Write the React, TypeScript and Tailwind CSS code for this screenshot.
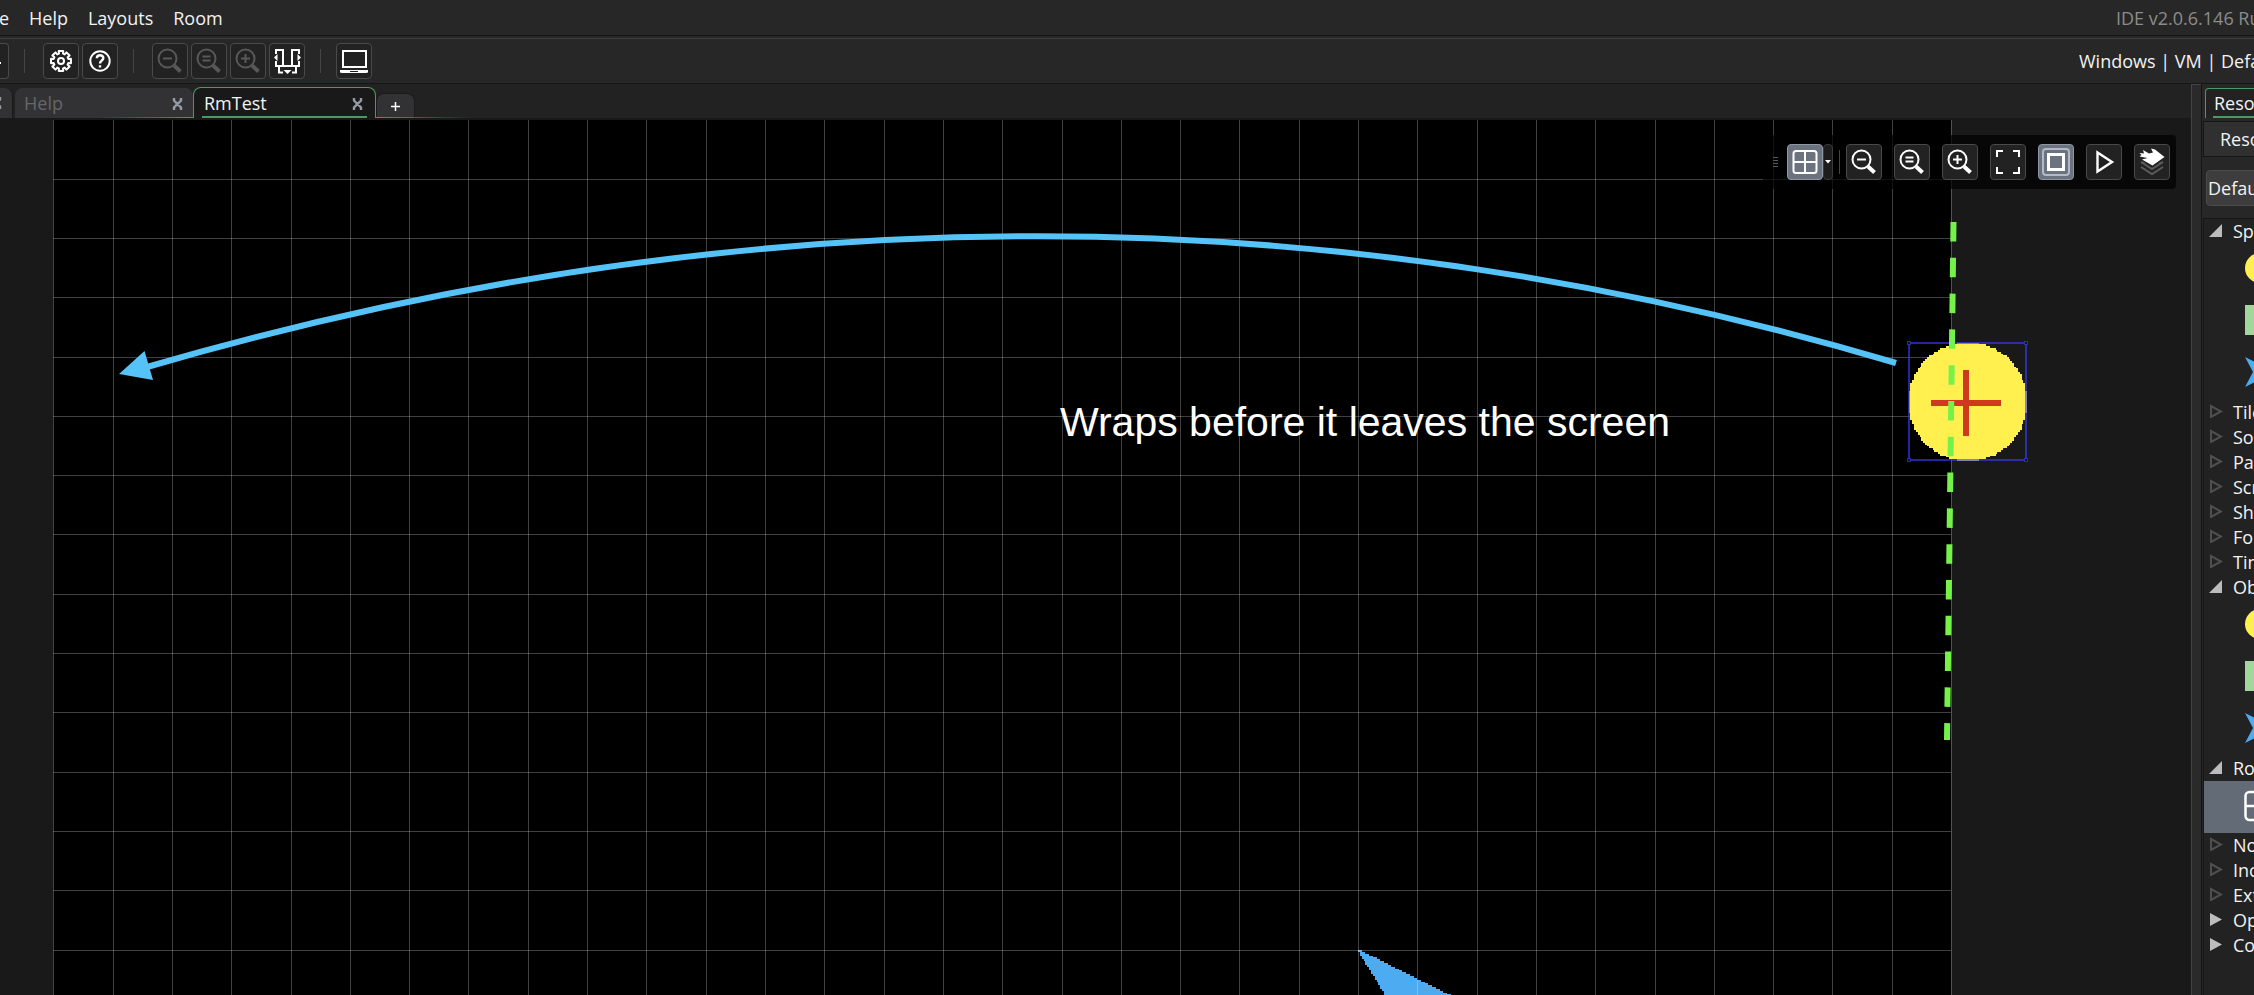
import type { ReactNode } from "react";

const SCALE = 59.3 / 32;

/* ---------- icons ---------- */

function Glyph({ children }: { children: ReactNode }) {
  return (
    <svg width="34" height="34" viewBox="1 1 34 34" fill="none" stroke="currentColor" strokeWidth="2" aria-hidden="true">
      {children}
    </svg>
  );
}

function Magnifier({ mark }: { mark: "minus" | "equal" | "plus" }) {
  return (
    <Glyph>
      <circle cx="15.5" cy="15.5" r="9" />
      <path d="M22 22.5 L28.5 28.5" strokeWidth="4" />
      {mark === "minus" && <path d="M11 15.5H20" />}
      {mark === "equal" && <path d="M11.5 13.5H19.5M11.5 17.5H19.5" />}
      {mark === "plus" && <path d="M11 15.5H20M15.5 11V20" />}
    </Glyph>
  );
}

function gearPath() {
  const pts: string[] = [];
  for (let i = 0; i < 8; i++) {
    const a = (i * Math.PI) / 4;
    for (const [d, r] of [[-0.27, 7.6], [-0.22, 10.2], [0.22, 10.2], [0.27, 7.6]]) {
      pts.push(`${(18 + r * Math.sin(a + d)).toFixed(2)} ${(18 - r * Math.cos(a + d)).toFixed(2)}`);
    }
  }
  return `M${pts.join("L")}Z`;
}

const Gear = () => (
  <Glyph>
    <path d={gearPath()} strokeLinejoin="round" />
    <circle cx="18" cy="18" r="3" />
  </Glyph>
);

const Question = () => (
  <Glyph>
    <circle cx="18" cy="18" r="9.7" />
    <path d="M14.8 15.2C15 11.2 21.4 11.4 21.3 15.1C21.2 17.6 18 17.6 18 20.4M18 22.3V24.6" strokeWidth="2.4" />
  </Glyph>
);

const Docking = () => (
  <Glyph>
    <path d="M7 11V7H14V23M7 18V23H30V18M30 11V7H23V23M10 23V29.500H14M27 23V29.500H23" />
    <path d="M5 14.500L8.500 11V18ZM32 14.500L28.500 11V18ZM14.500 27H22.500L18.500 31Z" fill="currentColor" stroke="none" />
  </Glyph>
);

const Laptop = () => (
  <Glyph>
    <rect x="7" y="8" width="23" height="16" />
    <path d="M4 27H32V29.500L30 30H6L4 29.500Z" fill="currentColor" stroke="none" />
    <path d="M14 28.500H22" stroke="#222222" strokeWidth="1" />
  </Glyph>
);

const GridIcon = () => (
  <Glyph>
    <rect x="6.500" y="7" width="23" height="22" rx="2.500" />
    <path d="M18 7V29M6.500 18H29.500" />
  </Glyph>
);

const Corners = () => (
  <Glyph>
    <path d="M7 13V7H13M23 7H29V13M29 23V29H23M13 29H7V23" />
  </Glyph>
);

const ViewIcon = () => (
  <Glyph>
    <rect x="5" y="5" width="26" height="26" rx="3" stroke="#b4b9c6" />
    <rect x="10.500" y="10.500" width="15" height="15" strokeWidth="3" />
  </Glyph>
);

const Play = () => (
  <Glyph>
    <path d="M11.500 8.500V27.500L26 18Z" strokeWidth="2.400" />
  </Glyph>
);

const LayersIcon = () => (
  <Glyph>
    <path d="M7 18L11 20M25 20L29 18M7 18L18 25L29 18M7 23L18 30L29 23" stroke="#5c5c5c" />
    <path
      d="M17 4.500L21 5.500L30.500 13L18.500 21.500L8 15.500L13.500 14L5.500 12.500L7.500 11L5.500 9L10 9.500L9 6L15 9.500L19 8.500Z"
      fill="currentColor"
      stroke="none"
    />
  </Glyph>
);

/* ---------- shared controls ---------- */

function IconButton({ label, active, disabled, children }: { label: string; active?: boolean; disabled?: boolean; children: ReactNode }) {
  const tone = active
    ? "border-[#9097a4] bg-[#6b7280] text-white"
    : disabled
      ? "border-[#4a4a4a] bg-[#222222] text-[#585858]"
      : "border-[#4a4a4a] bg-[#222222] text-white";
  return (
    <button aria-label={label} disabled={disabled} className={`flex size-9 shrink-0 items-center justify-center rounded-sm border ${tone}`}>
      {children}
    </button>
  );
}

const Divider = ({ className }: { className: string }) => <span className={`h-6 w-px shrink-0 bg-[#454545] ${className}`} />;

const CloseMark = () => (
  <svg width="11" height="12" viewBox="0 0 11 12" fill="none" stroke="#949aa6" strokeWidth="2.400" aria-hidden="true">
    <path d="M2 0V2.500L9 9.500V12M9 0V2.500L2 9.500V12" />
  </svg>
);

/* ---------- room canvas ---------- */

function discPath(x: number, y: number) {
  let d = "";
  for (let r = 0; r < 64; r++) {
    const half = Math.round(Math.sqrt(32 * 32 - (r - 31.5) ** 2));
    d += `M${x + (32 - half) * SCALE} ${y + r * SCALE}h${2 * half * SCALE}v${SCALE + 0.1}h${-2 * half * SCALE}z`;
  }
  return d;
}

function shipPath(x: number, y: number) {
  let d = "";
  for (let r = 0; r < 40; r++) {
    const left = Math.round(r * 0.62);
    const right = Math.round(r * 2 + 2);
    d += `M${x + left * SCALE} ${y + r * SCALE}h${(right - left) * SCALE}v${SCALE + 0.1}h${-(right - left) * SCALE}z`;
  }
  return d;
}

const columns = Array.from({ length: 33 }, (_, i) => Math.round(53.4 + i * 59.3));
const rows = Array.from({ length: 24 }, (_, i) => Math.round(1.4 + i * 59.3));
const handles = [[1909, 225], [2026, 225], [1909, 342], [2026, 342]];

function RoomCanvas() {
  return (
    <svg className="absolute inset-0 size-full" role="img" aria-label="Room RmTest">
      <rect x="53" y="2" width="1898" height="100%" fill="#000000" />
      <path d={shipPath(1358, 832)} fill="#4dacf1" shapeRendering="crispEdges" />
      <g fill="#ffffff" fillOpacity="0.25">
        {columns.map((x) => (
          <rect key={x} x={x} y="2" width="1" height="100%" />
        ))}
        {rows.slice(1).map((y) => (
          <rect key={y} x="53" y={y} width="1898" height="1" />
        ))}
      </g>
      <path d={discPath(1908.5, 224.5)} fill="#fff050" shapeRendering="crispEdges" />
      <g fill="none" stroke="#3c3cff" strokeOpacity="0.62">
        <rect x="1909" y="225" width="117" height="117" strokeWidth="2" />
        {handles.map(([x, y]) => (
          <rect key={`${x}-${y}`} x={x - 1.5} y={y - 1.5} width="3" height="3" fill="#101018" />
        ))}
      </g>
      <path d="M1931 285H2001M1966 252V318" stroke="#cf391d" strokeWidth="6" />
      <path d="M1953.500 104L1947 622" stroke="#74f24a" strokeWidth="6" strokeDasharray="19.500 16.300" />
      <path d="M1896 245Q1038 -10.500 147 249" fill="none" stroke="#56c3f8" strokeWidth="6" />
      <path d="M119 256L144.500 233L153 262Z" fill="#56c3f8" />
    </svg>
  );
}

function RoomToolbar() {
  return (
    <div className="absolute top-[17px] right-[15px] flex items-center gap-3 rounded bg-black/70 py-[9px] pr-[6px] pl-[10px]">
      <div className="flex items-center">
        <svg width="5" height="10" className="mr-[9px]" stroke="#5a5a5a" aria-hidden="true">
          <path d="M0 .5H5M0 3.500H5M0 6.500H5M0 9.500H5" />
        </svg>
        <IconButton label="Grid" active>
          <GridIcon />
        </IconButton>
        <button aria-label="Grid options" className="flex h-9 w-[10px] items-center justify-center rounded-sm border border-[#3a3a3a] bg-[#1c1c1c]">
          <svg width="6" height="4" viewBox="0 0 6 4" fill="#ffffff" className="shrink-0" aria-hidden="true">
            <path d="M0 0H6L3 3.500Z" />
          </svg>
        </button>
        <Divider className="ml-[6px] -mr-[6px]" />
      </div>
      <IconButton label="Zoom out"><Magnifier mark="minus" /></IconButton>
      <IconButton label="Reset zoom"><Magnifier mark="equal" /></IconButton>
      <IconButton label="Zoom in"><Magnifier mark="plus" /></IconButton>
      <IconButton label="Centre and fit"><Corners /></IconButton>
      <IconButton label="Show views" active><ViewIcon /></IconButton>
      <IconButton label="Play animations"><Play /></IconButton>
      <IconButton label="Layers"><LayersIcon /></IconButton>
    </div>
  );
}

/* ---------- resource tree ---------- */

type Mark = "open" | "empty" | "closed";

function Branch({ label, mark }: { label: string; mark: Mark }) {
  return (
    <button className="flex h-[25px] w-full items-center gap-[10px] pl-[5px] text-left leading-[25px] whitespace-nowrap">
      <svg width="14" height="14" viewBox="0 0 14 14" className="mb-1 shrink-0" aria-hidden="true">
        {mark === "open" && <path d="M0 14L13 1V14Z" fill="#bcbcbc" />}
        {mark === "closed" && <path d="M1 1V14L13 7.500Z" fill="#bcbcbc" />}
        {mark === "empty" && <path d="M2 2V13L12 7.500Z" fill="none" stroke="#4f4f4f" strokeWidth="2" />}
      </svg>
      {label}
    </button>
  );
}

function Sprites() {
  return (
    <>
      <div className="flex h-[52px] items-center pb-1 pl-[41px]">
        <svg width="30" height="30" className="shrink-0" aria-hidden="true"><circle cx="15" cy="15" r="15" fill="#fff050" /></svg>
      </div>
      <div className="flex h-[52px] items-center pb-1 pl-[41px]">
        <span className="size-[30px] shrink-0 bg-[#a3d69c]" />
      </div>
      <div className="flex h-[52px] items-center pb-1 pl-[41px]">
        <svg width="30" height="30" className="shrink-0" aria-hidden="true"><path d="M0 0L30 15L0 30L8 15Z" fill="#4dacf1" /></svg>
      </div>
    </>
  );
}

const emptyFolders = ["Tile Sets", "Sounds", "Paths", "Scripts", "Shaders", "Fonts", "Timelines"];
const trailingFolders = ["Notes", "Included Files", "Extensions"];

function ResourcePanel() {
  return (
    <aside className="flex w-[63px] shrink-0 overflow-hidden bg-[#272727]">
      <div className="w-[10px] shrink-0 border-l border-t border-[#444444] bg-[#2a2a2a]" />
      <div className="min-w-0 grow overflow-hidden border-l border-[#141414] whitespace-nowrap">
        <div className="mt-1 ml-[3px] h-[30px] w-40 rounded-tl border-t border-l border-[#4a9a67] bg-[#222222] pl-[7px]">
          <div className="h-[29px] border-b-2 border-[#4a9a67] pl-px leading-[29px]">Resources</div>
        </div>
        <div className="mt-[3px] ml-px h-9 w-60 border border-[#161616] bg-[#303030] pl-4 leading-[34px]">Resources</div>
        <button className="mt-[13px] ml-1 block h-9 w-40 rounded-sm border border-[#4b4b4b] bg-[#3d3d3d] pl-px text-left">Default</button>
        <div className="mt-3 ml-px h-full border-t border-l border-[#161616] bg-[#222222]">
          <Branch label="Sprites" mark="open" />
          <Sprites />
          {emptyFolders.map((name) => (
            <Branch key={name} label={name} mark="empty" />
          ))}
          <Branch label="Objects" mark="open" />
          <Sprites />
          <Branch label="Rooms" mark="open" />
          <div className="flex h-[52px] items-center bg-[#636b77] pb-[2px] pl-10">
            <svg width="32" height="32" fill="none" stroke="#ffffff" strokeWidth="2.500" className="shrink-0" aria-hidden="true">
              <rect x="1.500" y="2" width="29" height="28" rx="4" />
              <path d="M1.500 16H30.500M16 2V30" />
            </svg>
          </div>
          {trailingFolders.map((name) => (
            <Branch key={name} label={name} mark="empty" />
          ))}
          <Branch label="Options" mark="closed" />
          <Branch label="Configurations" mark="closed" />
        </div>
      </div>
    </aside>
  );
}

/* ---------- page ---------- */

export default function App() {
  return (
    <div className="flex h-screen flex-col overflow-hidden bg-[#272727] font-['Open_Sans',sans-serif] text-[18px] text-[#f2f2f2]">
      <header className="shrink-0">
        <div className="flex h-9 items-center justify-between border-b border-[#141414] pt-[2px] whitespace-nowrap">
          <nav className="flex items-center gap-5">
            <span className="flex w-[9px] justify-end overflow-hidden">
              <button>Marketplace</button>
            </span>
            <button>Help</button>
            <button>Layouts</button>
            <button>Room</button>
          </nav>
          <p className="w-[138px] shrink-0 overflow-hidden text-[#8c8c8c]">IDE v2.0.6.146 Runtime</p>
        </div>
        <div className="mt-[2px] flex h-[46px] items-center justify-between border-t border-b border-t-[#3e3e3e] border-b-[#161616] whitespace-nowrap">
          <div className="flex items-center">
            <button aria-label="Clean" className="flex h-9 w-[9px] items-center rounded-r-sm border border-l-0 border-[#4a4a4a] bg-[#222222]">
              <span className="mt-1 h-[2px] w-px bg-white" />
            </button>
            <Divider className="mr-[18px] ml-[15px]" />
            <div className="flex gap-[3px]">
              <IconButton label="Preferences"><Gear /></IconButton>
              <IconButton label="Manual"><Question /></IconButton>
            </div>
            <Divider className="mr-[18px] ml-[15px]" />
            <div className="flex gap-[3px]">
              <IconButton label="Zoom out workspace" disabled><Magnifier mark="minus" /></IconButton>
              <IconButton label="Reset workspace zoom" disabled><Magnifier mark="equal" /></IconButton>
              <IconButton label="Zoom in workspace" disabled><Magnifier mark="plus" /></IconButton>
              <IconButton label="Toggle docks"><Docking /></IconButton>
            </div>
            <Divider className="mr-[15px] ml-[15px]" />
            <IconButton label="Laptop mode"><Laptop /></IconButton>
          </div>
          <button className="w-[175px] shrink-0 overflow-hidden text-left">Windows | VM | Default</button>
        </div>
      </header>

      <div className="flex min-h-0 grow">
        <div className="flex min-w-0 grow flex-col bg-[#222222]">
          <div className="flex h-[34px] shrink-0 items-end">
            <div className="flex h-[30px] w-[13px] items-center overflow-hidden rounded-tr-lg border-r border-[#191919] bg-[#323235]">
              <button aria-label="Close tab" className="-ml-[9px] shrink-0"><CloseMark /></button>
            </div>
            <div className="relative ml-[2px] flex h-[30px] w-[178px] items-center justify-between rounded-t-lg bg-[#323235] pt-px pr-[10px] pl-[9px] text-[#66666a]">
              <span>Help</span>
              <button aria-label="Close Help"><CloseMark /></button>
              <span className="absolute right-0 bottom-0 h-px w-24 bg-linear-to-l from-[#4a9a67] to-transparent" />
            </div>
            <div className="flex h-[31px] w-[183px] rounded-t-lg border-x border-t border-[#4a9a67] bg-[#191919] px-2">
              <div className="flex h-[30px] grow items-center justify-between border-b-2 border-[#4a9a67] pt-[3px] pr-1 pl-[2px]">
                <span>RmTest</span>
                <button aria-label="Close RmTest"><CloseMark /></button>
              </div>
            </div>
            <div className="relative flex items-end">
              <button aria-label="New tab" className="flex h-[25px] w-[39px] items-center justify-center rounded-t-lg border border-b-0 border-[#1b1b1b] bg-[#323235]">
                <svg width="9" height="9" stroke="#ffffff" strokeWidth="1.500" aria-hidden="true"><path d="M4.500 0V9M0 4.500H9" /></svg>
              </button>
              <span className="absolute bottom-0 left-0 h-px w-24 bg-linear-to-r from-[#4a9a67] to-transparent" />
            </div>
          </div>
          <main className="relative min-h-0 grow overflow-hidden bg-[#191919]">
            <RoomCanvas />
            <p className="absolute top-[280px] left-[1060px] font-['Liberation_Sans',sans-serif] text-[41px] leading-[48px] whitespace-nowrap text-white">
              Wraps before it leaves the screen
            </p>
            <RoomToolbar />
          </main>
        </div>
        <ResourcePanel />
      </div>
    </div>
  );
}
